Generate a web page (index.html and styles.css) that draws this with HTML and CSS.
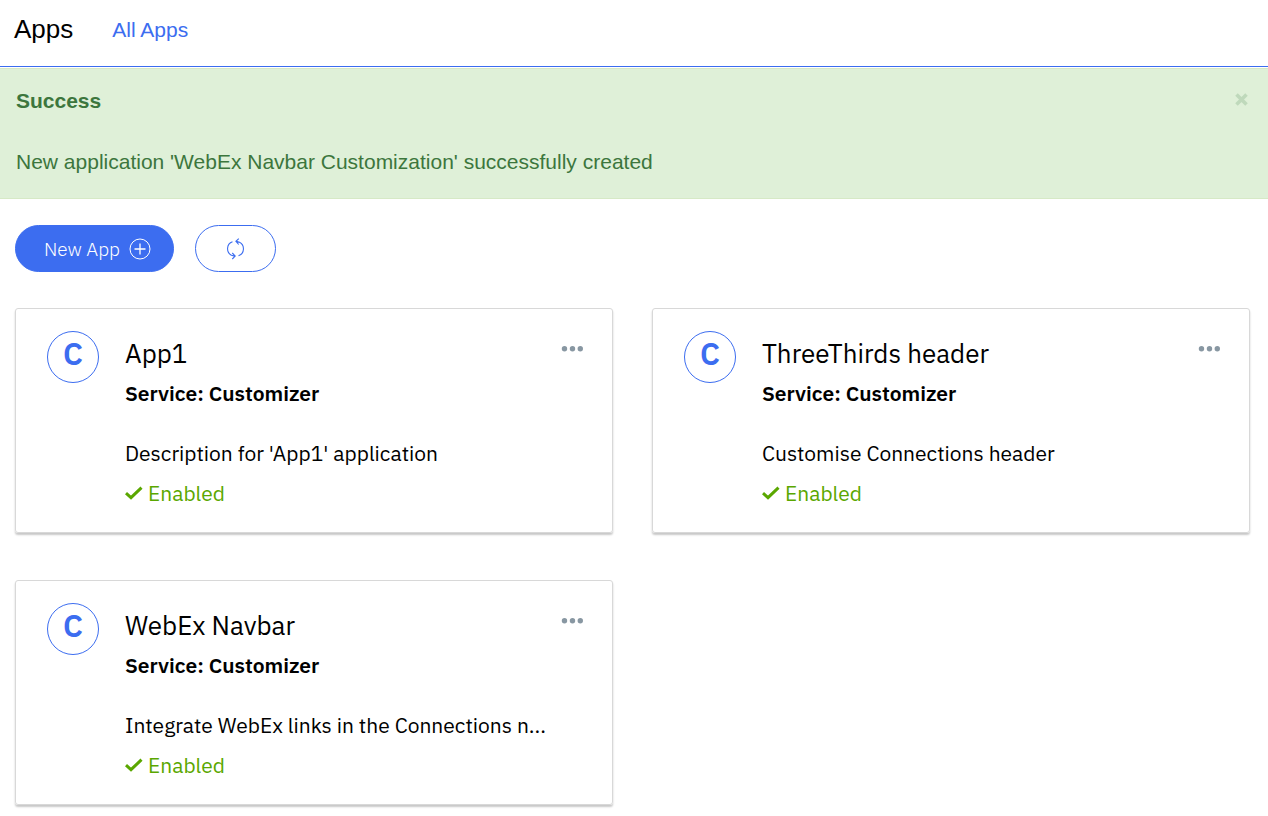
FILE: index.html
```html
<!DOCTYPE html>
<html lang="en">
<head>
<meta charset="utf-8">
<meta name="viewport" content="width=device-width, initial-scale=1">
<title>Apps</title>
<link rel="stylesheet" href="styles.css">
</head>
<body>
<svg class="sprite" aria-hidden="true">
  <symbol id="check" viewBox="0 0 18 14"><path d="M1 7.200 6 11.700 16.500 1.700" fill="none" stroke="currentColor" stroke-width="3"/></symbol>
  <symbol id="dots" viewBox="0 0 22 6"><circle cx="3.500" cy="2.700" r="2.700"/><circle cx="11.500" cy="2.700" r="2.700"/><circle cx="19.300" cy="2.700" r="2.700"/></symbol>
</svg>

<header class="header">
  <h1 class="header-title">Apps</h1>
  <nav class="header-nav"><a class="header-link" href="#">All Apps</a></nav>
</header>

<main>
  <section class="alert" role="status">
    <div>
      <h2 class="alert-title">Success</h2>
      <p class="alert-text">New application 'WebEx Navbar Customization' successfully created</p>
    </div>
    <button class="alert-close" type="button" aria-label="Close">
      <svg width="13" height="13" viewBox="0 0 13 13"><path d="M1.500 1.500 11.500 11.500M11.500 1.500 1.500 11.500" stroke="currentColor" stroke-width="3.600"/></svg>
    </button>
  </section>

  <div class="toolbar">
    <button class="button button-primary" type="button">
      <span>New App</span>
      <svg width="22" height="22" viewBox="0 0 22 22" fill="none" stroke="currentColor"><circle cx="11" cy="11" r="10"/><path d="M11 5.500v11M5.500 11h11" stroke-width="1.300"/></svg>
    </button>
    <button class="button button-outline" type="button" aria-label="Refresh">
      <svg width="19" height="22" viewBox="0 0 19 22" fill="none" stroke="currentColor" stroke-width="1.100"><path d="M6.500 3.700C.2 5.700 0 14.500 5.500 17.300l3 .8M6.300 15 9.200 18.100 6.300 21M12.500 17.700C18.800 15.700 19 7 13.500 4.200l-3-.8M12.800.600 9.900 3.400 12.700 6.500"/></svg>
    </button>
  </div>

  <div class="cards">
    <article class="card">
      <span class="avatar">C</span>
      <div class="card-body">
        <h2 class="card-title">App1</h2>
        <p class="card-service">Service: Customizer</p>
        <p class="card-text">Description for 'App1' application</p>
        <p class="card-status"><svg width="18" height="14"><use href="#check"/></svg>Enabled</p>
      </div>
      <button class="menu" type="button" aria-label="App1 options"><svg width="22" height="6"><use href="#dots"/></svg></button>
    </article>
    <article class="card">
      <span class="avatar">C</span>
      <div class="card-body">
        <h2 class="card-title">ThreeThirds header</h2>
        <p class="card-service">Service: Customizer</p>
        <p class="card-text">Customise Connections header</p>
        <p class="card-status"><svg width="18" height="14"><use href="#check"/></svg>Enabled</p>
      </div>
      <button class="menu" type="button" aria-label="ThreeThirds header options"><svg width="22" height="6"><use href="#dots"/></svg></button>
    </article>
    <article class="card">
      <span class="avatar">C</span>
      <div class="card-body">
        <h2 class="card-title">WebEx Navbar</h2>
        <p class="card-service">Service: Customizer</p>
        <p class="card-text">Integrate WebEx links in the Connections n...</p>
        <p class="card-status"><svg width="18" height="14"><use href="#check"/></svg>Enabled</p>
      </div>
      <button class="menu" type="button" aria-label="WebEx Navbar options"><svg width="22" height="6"><use href="#dots"/></svg></button>
    </article>
  </div>
</main>
</body>
</html>
```
FILE: styles.css
```css
* { box-sizing: border-box; }
body, h1, h2, p { margin: 0; }
body {
  background: #fff;
  color: #000;
  font-family: "IBM Plex Sans", Roboto, sans-serif;
  font-size: 21px;
}
button {
  padding: 0;
  border: 0;
  background: none;
  font: inherit;
  cursor: pointer;
}
svg { display: block; flex: none; }
.sprite { position: absolute; width: 0; height: 0; }

.header {
  display: flex;
  align-items: center;
  gap: 39px;
  padding: 14px 14px 22px;
  border-bottom: 1px solid #3c6df0;
  font-family: "Liberation Sans", Arial, sans-serif;
}
.header-title { font-size: 26px; font-weight: 400; line-height: 30px; }
.header-nav { padding-top: 2px; }
.header-link { color: #3c6df0; text-decoration: none; }

.alert {
  display: flex;
  justify-content: space-between;
  align-items: flex-start;
  margin-top: 1px;
  padding: 17px 20px 21px 16px;
  border-top: 1px solid #d6e9c6;
  border-bottom: 1px solid #d6e9c6;
  background: #dff0d8;
  color: #3c763d;
  font-family: "Liberation Sans", Arial, sans-serif;
}
.alert-title { font-size: 21px; line-height: 30px; }
.alert-text { margin-top: 31px; line-height: 30px; }
.alert-close { margin-top: 7px; color: #bfd9bb; }

.toolbar { display: flex; gap: 21px; padding: 26px 15px 36px; }
.button {
  display: flex;
  align-items: center;
  justify-content: center;
  height: 47px;
  border: 1px solid #3c6df0;
  border-radius: 24px;
  font-size: 19px;
  font-weight: 300;
}
.button-primary { gap: 9px; padding: 0 22px 0 28px; background: #3c6df0; color: #fff; }
.button-outline { padding: 0 30px; background: #fff; color: #3c6df0; }

.cards {
  display: grid;
  grid-template-columns: repeat(2, minmax(0, 1fr));
  gap: 47px 39px;
  padding: 0 18px 10px 15px;
}
.card {
  display: flex;
  align-items: flex-start;
  padding: 22px 29px 19px 31px;
  border: 1px solid #d8d8d8;
  border-radius: 3px;
  box-shadow: 0 2px 2px rgba(0, 0, 0, .22);
}
.avatar {
  display: flex;
  flex: none;
  justify-content: center;
  width: 52px;
  height: 52px;
  border: 1px solid #3c6df0;
  border-radius: 50%;
  color: #3c6df0;
  font-size: 31px;
  font-weight: 600;
  line-height: 44px;
}
.card-body { flex: 1; min-width: 0; padding-left: 26px; }
.card-title { font-size: 26px; font-weight: 400; line-height: 44px; }
.card-service { font-weight: 600; line-height: 36px; }
.card-text { margin-top: 22px; line-height: 40px; }
.card-status { display: flex; align-items: center; gap: 5px; color: #5aa700; line-height: 40px; }
.menu { margin-top: 15px; color: #8897a2; }
.menu svg { fill: currentColor; }
```
